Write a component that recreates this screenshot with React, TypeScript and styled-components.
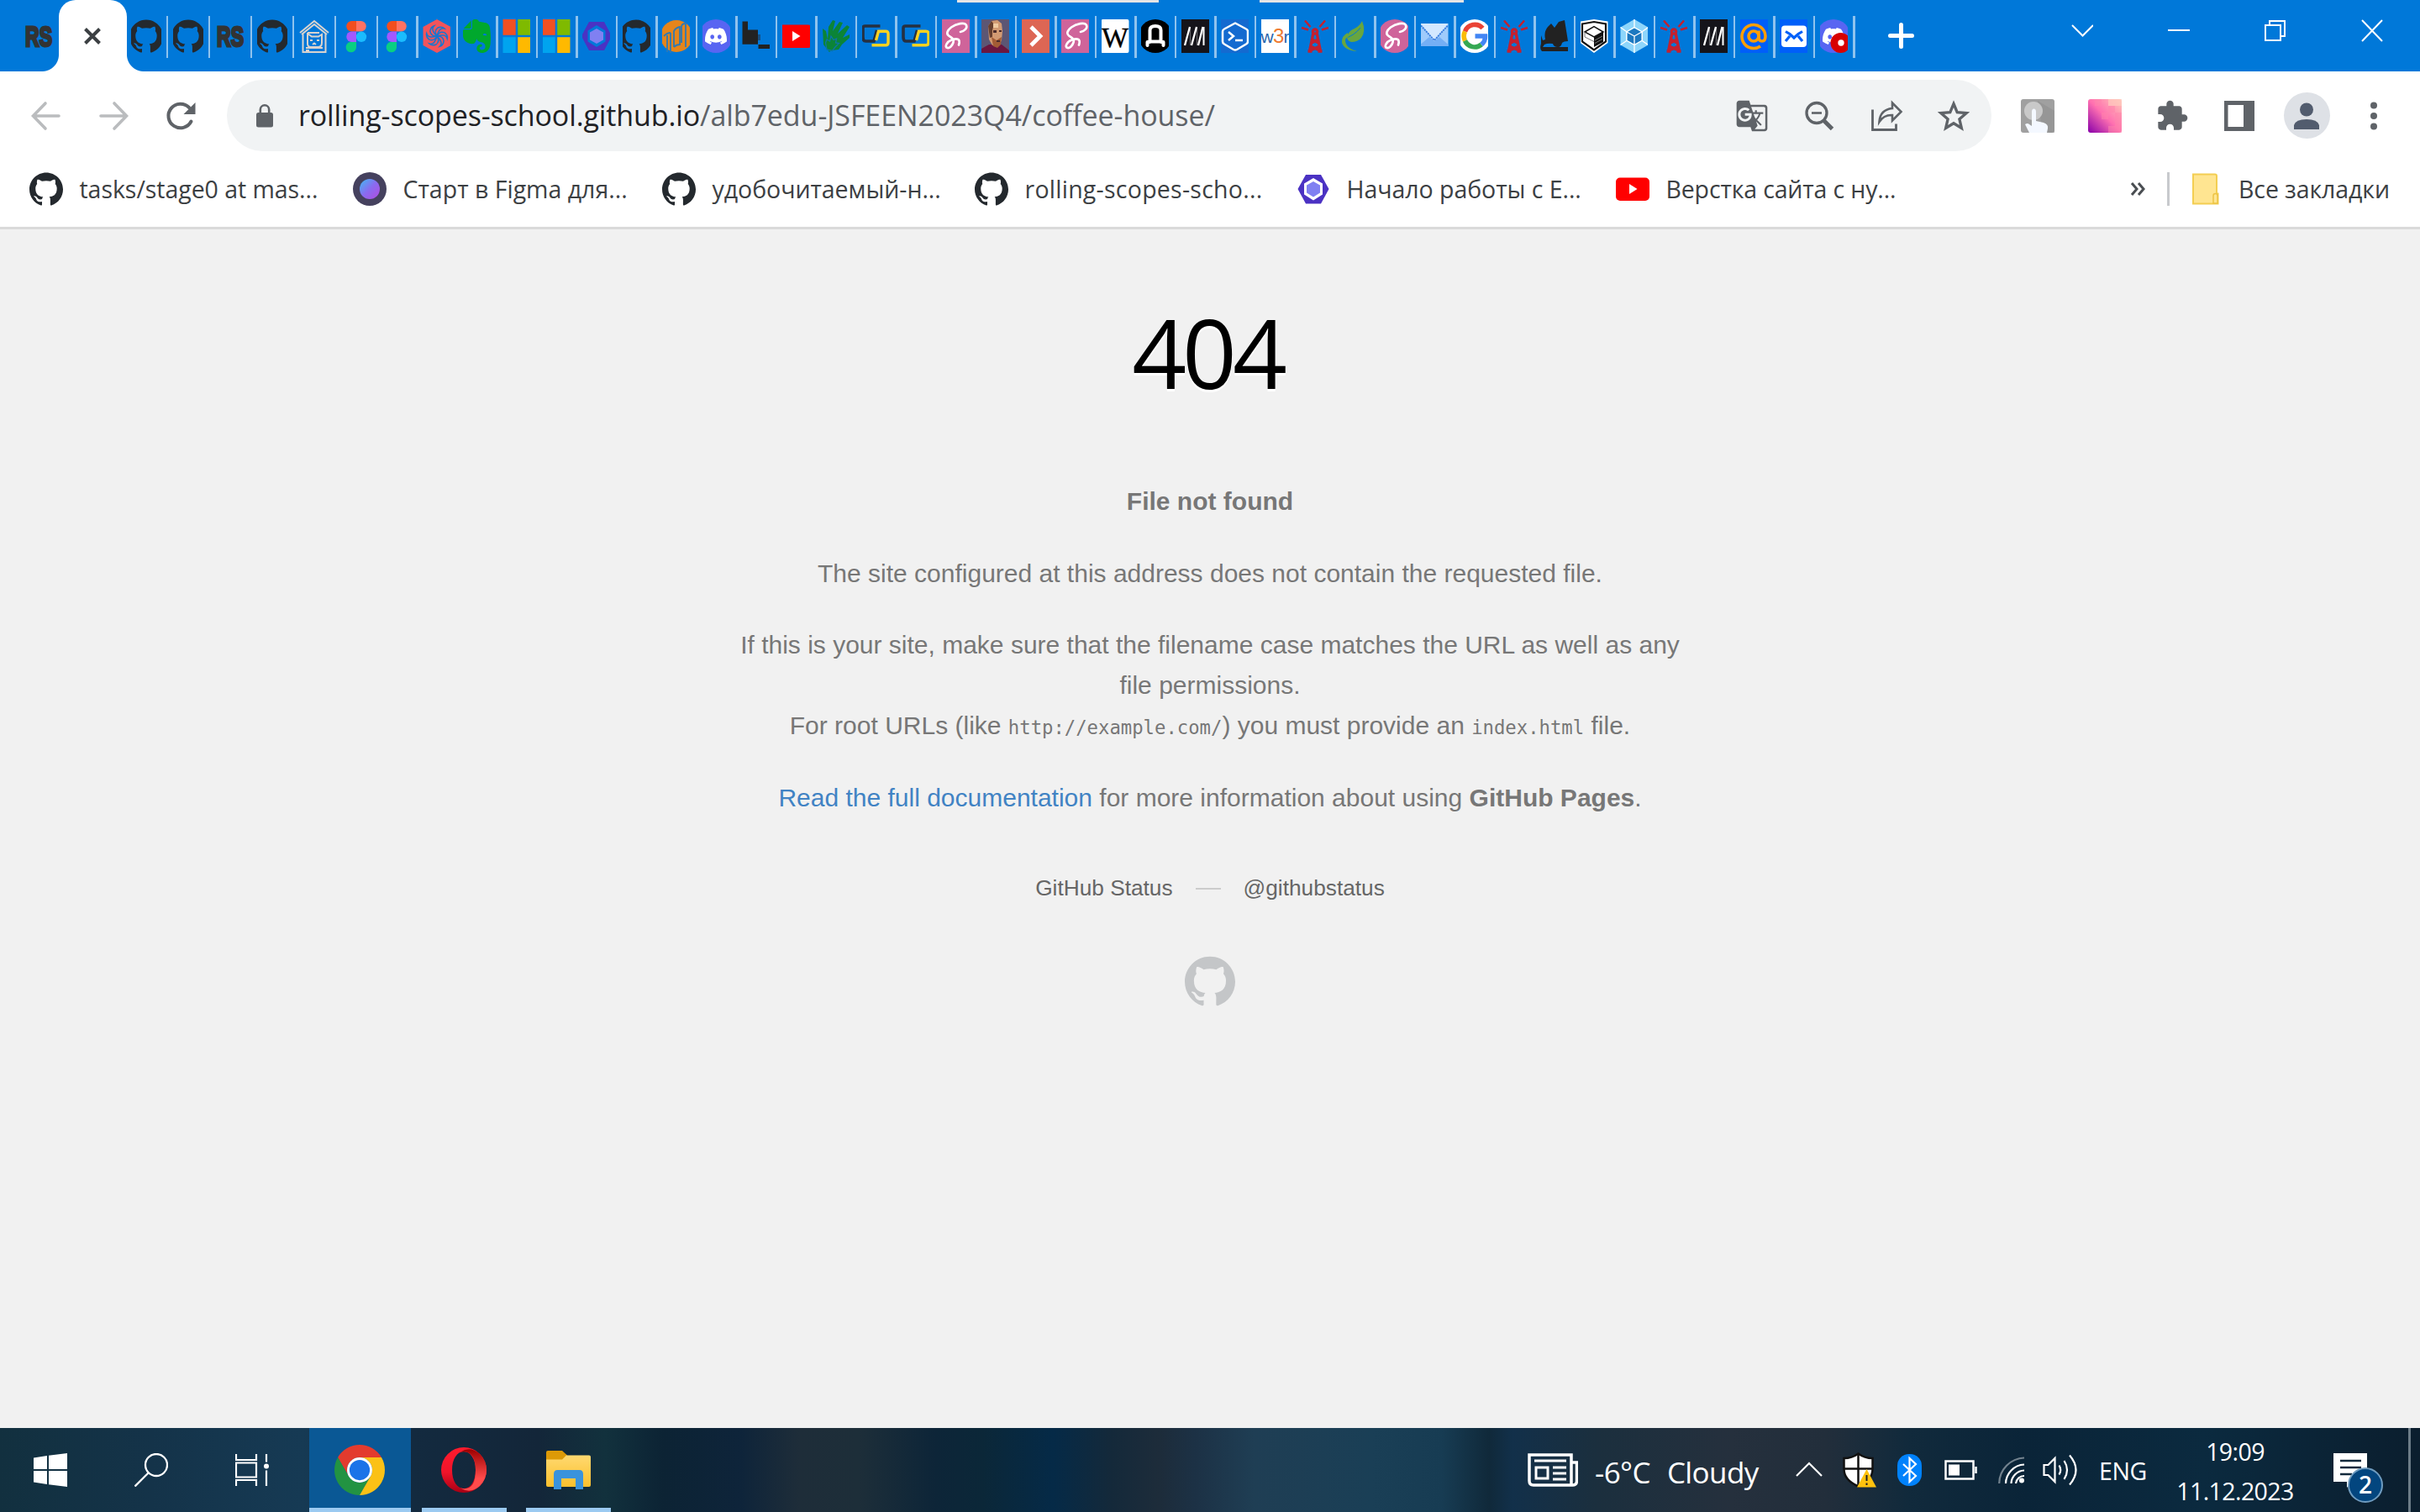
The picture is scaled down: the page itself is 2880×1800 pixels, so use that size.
import React from "react";
import styled, { createGlobalStyle, css } from "styled-components";
import { SiGithub, SiDiscord, SiEvernote } from "react-icons/si";
import { MdGTranslate, MdExtension } from "react-icons/md";

const UI_FONT = '"Open Sans", "Noto Sans", sans-serif';
const PAGE_FONT = '"Liberation Sans", Arial, sans-serif';

const GlobalStyle = createGlobalStyle`
  *, *::before, *::after { box-sizing: border-box; }
  body { margin: 0; background: #f1f1f1; }
  p, h1 { margin: 0; }
  a { color: inherit; text-decoration: none; }
  svg { display: block; flex-shrink: 0; }
`;

const Screen = styled.div`
  display: flex;
  flex-direction: column;
  width: 2880px;
  height: 1800px;
  overflow: hidden;
  background: #f1f1f1;
  font-family: ${UI_FONT};
  white-space: nowrap;
`;

/* ---------- tab strip ---------- */

const TabStrip = styled.header`
  position: relative;
  display: flex;
  height: 85px;
  flex-shrink: 0;
  background: #0078d9;
`;

const Notch = styled.div<{ $x: number; $w: number }>`
  position: absolute;
  top: 0;
  left: ${(p) => p.$x}px;
  width: ${(p) => p.$w}px;
  height: 3px;
  background: #e5e5e5;
`;

const PinnedTab = styled.div`
  display: flex;
  width: 70px;
  padding: 23px 6px 0 28px;
`;

const ActiveTab = styled.div`
  position: relative;
  display: flex;
  align-items: center;
  justify-content: center;
  width: 80.5px;
  height: 85px;
  background: #fff;
  border-radius: 20px 20px 0 0;

  &::before,
  &::after {
    content: "";
    position: absolute;
    bottom: 0;
    width: 20px;
    height: 20px;
  }
  &::before {
    left: -20px;
    background: radial-gradient(circle at 0 0, transparent 19.5px, #fff 20.5px);
  }
  &::after {
    right: -20px;
    background: radial-gradient(circle at 100% 0, transparent 19.5px, #fff 20.5px);
  }
`;

const Tab = styled.div<{ $wide?: boolean }>`
  display: flex;
  align-items: flex-start;
  justify-content: space-between;
  width: ${(p) => (p.$wide ? 49.95 : 47.5)}px;
  padding: 19px 0 0 5.5px;
  flex-shrink: 0;
`;

const TabDivider = styled.i`
  width: 2.5px;
  height: 50px;
  background: #8fc3ee;
`;

const Favicon = styled.div<{ $w?: number; $color?: string }>`
  display: flex;
  justify-content: center;
  width: ${(p) => p.$w ?? 33}px;
  height: 40px;
  margin-top: 4px;
  overflow: hidden;
  color: ${(p) => p.$color ?? "#24292e"};
  flex-shrink: 0;
`;

const PinnedFavicon = styled(Favicon)`
  margin-top: 0;
`;

const NewTab = styled.button`
  display: flex;
  margin: 27px 0 0 39px;
  padding: 0;
  width: 31px;
  height: 31px;
  border: 0;
  background: none;
`;

const WindowControls = styled.div`
  display: flex;
  margin-left: auto;
  padding: 23px 44px 0 0;
  gap: 89px;
`;

/* ---------- toolbar ---------- */

const Toolbar = styled.nav`
  display: flex;
  align-items: center;
  height: 105px;
  flex-shrink: 0;
  padding: 0 35px;
  background: #fff;
`;

const NavButtons = styled.div`
  display: flex;
  gap: 40px;
  width: 235px;
`;

const Omnibox = styled.div`
  display: flex;
  align-items: center;
  width: 2100px;
  height: 85px;
  padding: 0 25px 0 35px;
  border-radius: 43px;
  background: #f1f3f4;
`;

const Url = styled.div`
  margin-left: 30px;
  flex: 1;
  font-size: 34px;
  line-height: 85px;
  letter-spacing: -0.07px;
  color: #5f6368;
`;

const UrlHost = styled.span`
  letter-spacing: -0.12px;
  color: #202124;
`;

const IconRow = styled.div<{ $left?: number }>`
  display: flex;
  align-items: center;
  gap: 40px;
  margin-left: ${(p) => p.$left ?? 0}px;
  color: #5f6368;
`;

const Avatar = styled.div`
  display: flex;
  align-items: center;
  justify-content: center;
  width: 55px;
  height: 55px;
  margin: 0 -7.5px;
  border-radius: 50%;
  background: #dee1e6;
`;

/* ---------- bookmarks ---------- */

const BookmarkBar = styled.nav`
  display: flex;
  align-items: center;
  height: 93px;
  flex-shrink: 0;
  margin-top: -10px;
  padding: 10px 36px 10px 35px;
  border-bottom: 3px solid #dadada;
  background: #fff;
`;

const Bookmark = styled.a<{ $w?: number; $ls?: number }>`
  display: flex;
  align-items: center;
  gap: 19.5px;
  ${(p) => p.$w && css`width: ${p.$w}px;`}
  letter-spacing: ${(p) => p.$ls ?? 0}px;
  font-size: 28.5px;
  line-height: 40px;
  color: #3c4043;
`;

const BookmarkTail = styled.div`
  display: flex;
  align-items: center;
  margin-left: auto;
`;

const BarDivider = styled.i`
  width: 3px;
  height: 40px;
  margin: 0 27px 0 26px;
  background: #c8cacd;
`;

/* ---------- page ---------- */

const Page = styled.main`
  display: flex;
  flex-direction: column;
  align-items: center;
  flex: 1;
  padding-top: 71px;
  font-family: ${PAGE_FONT};
  font-size: 30px;
  line-height: 48px;
  text-align: center;
  color: #777;
`;

const Title = styled.h1`
  margin-bottom: 79px;
  padding-right: 6px;
  font-family: ${UI_FONT};
  font-size: 113.5px;
  font-weight: 400;
  line-height: 150px;
  letter-spacing: -5.1px;
  color: #000;
  text-shadow: 0 2.5px 0 #fff;
`;

const Paragraph = styled.p`
  margin-bottom: 37.5px;
`;

const Code = styled.code`
  font-family: "DejaVu Sans Mono", monospace;
  font-size: 22.25px;
  line-height: 1;
`;

const DocLink = styled.a`
  color: #4183c4;
`;

const StatusLinks = styled.div`
  display: flex;
  align-items: center;
  gap: 27px;
  margin: 22px 0 57px;
  font-size: 26.25px;
  line-height: 48px;
  color: #666;
`;

const Dash = styled.i`
  width: 30px;
  height: 2px;
  margin-top: 2px;
  background: #ccc;
`;

/* ---------- taskbar ---------- */

const Taskbar = styled.footer`
  display: flex;
  height: 100px;
  flex-shrink: 0;
  color: #fff;
  background: linear-gradient(
    90deg,
    #12303f 0, #143349 180px, #163a54 360px, #132a3f 490px, #132639 640px,
    #12313d 720px, #0c2334 790px, #0e243a 881px, #1e2d39 951px, #1d2e39 1022px,
    #0d2538 1113px, #0b2738 1169px, #052a47 1253px, #14293a 1323px, #1d2c3a 1379px,
    #1c3145 1421px, #1f3e54 1492px, #1a3f56 1632px, #173c53 1716px, #10293a 1772px,
    #12304a 1800px, #1b2f3e 1899px, #25303d 2060px, #222e3b 2173px, #112a3c 2271px,
    #0a2438 2411px, #0b2a3f 2622px, #0b1e2e 2880px
  );
`;

const TaskGroup = styled.div`
  display: flex;
  align-items: center;
  gap: 80px;
  width: 368px;
  padding-left: 40px;
`;

const TaskApp = styled.div<{ $active?: boolean }>`
  display: flex;
  align-items: center;
  justify-content: center;
  width: ${(p) => (p.$active ? 121 : 101)}px;
  margin-right: ${(p) => (p.$active ? 13 : 23)}px;
  border-bottom: 5px solid #9bcaf1;
  padding: 5px 1px 0 0;
  background: ${(p) => (p.$active ? "#0a5895" : "transparent")};
`;

const Tray = styled.div`
  display: flex;
  align-items: center;
  margin-left: auto;
`;

const Slot = styled.div<{ $w: number }>`
  display: flex;
  align-items: center;
  width: ${(p) => p.$w}px;
`;

const Weather = styled.span`
  display: flex;
  gap: 20px;
  width: 239px;
  margin-top: 5px;
  font-size: 35px;
  line-height: 48px;
  letter-spacing: -0.6px;
`;

const Lang = styled.span`
  width: 91px;
  margin-top: 2px;
  font-size: 28.5px;
  letter-spacing: -0.4px;
`;

const Clock = styled.div`
  display: flex;
  flex-direction: column;
  align-items: center;
  width: 142px;
  margin-top: 3px;
  font-size: 28.5px;
  line-height: 47px;
  letter-spacing: -0.6px;
`;

const Notifications = styled.div`
  position: relative;
  width: 60px;
  height: 60px;
  margin: 20px 29px 0 46px;
`;

const Badge = styled.b`
  position: absolute;
  left: 17px;
  top: 17px;
  width: 42px;
  height: 42px;
  border: 2px solid #6f9cc0;
  border-radius: 50%;
  background: #03467f;
  font-size: 28px;
  font-weight: 600;
  line-height: 37px;
  text-align: center;
`;

const ShowDesktop = styled.i`
  width: 14px;
  height: 100px;
  border-left: 3px solid #6c7c87;
`;

/* ---------- drawings ---------- */

const Svg = ({ children, size = 40 }: { children: React.ReactNode; size?: number }) => (
  <svg width={size} height={size} viewBox="0 0 40 40">{children}</svg>
);

const RsLogo = () => (
  <Svg>
    <text x="4" y="32.300" fontFamily="Liberation Sans, sans-serif" fontWeight="700" fontSize="34" textLength="32" lengthAdjust="spacingAndGlyphs" fill="#333" stroke="#333" strokeWidth="3">RS</text>
  </Svg>
);

const CatHouse = () => (
  <Svg>
    <g fill="none" stroke="#d9d3cf" strokeWidth="2">
      <path d="M3 16 20 2l17 14M5 18 20 6l15 12M6.500 17v22h27V17M10 34h20M10 37h4" />
      <path d="M12 16h14M12 16v13q0 4 4 4h8q5 0 5-5V18l-4 2.500h-8L12 17" />
      <path d="M15 25h3M23 25h3M18 30l2-1.500 2 1.500M20 28v1" />
    </g>
  </Svg>
);

const Figma = () => (
  <Svg>
    <path d="M14.500 2H20v12.500h-5.500a6.200 6.200 0 0 1 0-12.500z" fill="#f24e1e" />
    <path d="M20 2h5.500a6.200 6.200 0 0 1 0 12.500H20z" fill="#ff7262" />
    <path d="M14.500 14.500H20V27h-5.500a6.200 6.200 0 0 1 0-12.500z" fill="#a259ff" />
    <circle cx="26" cy="20.800" r="6.200" fill="#1abcfe" />
    <path d="M14.500 27H20v6.500a6.200 6.200 0 1 1-5.500-6.500z" fill="#0acf83" />
  </Svg>
);

const SwirlHex = () => (
  <Svg>
    <path d="M20 0 36.500 9v22L20 40 3.500 31V9z" fill="#f2545b" />
    <g fill="none" stroke="#1876cf" strokeWidth="1.500">
      {[0, 60, 120, 180, 240, 300].map((a) => (
        <path key={a} d="M20 20q-4-6 1-10 5-2 8 1-4-1-6 2-2 3-3 7" transform={`rotate(${a} 20 20)`} />
      ))}
    </g>
  </Svg>
);

const Microsoft = () => (
  <Svg>
    <path d="M3.500 0h15.200v18.800H3.500z" fill="#f25022" />
    <path d="M21.200 0h15.300v18.800H21.200z" fill="#7fba00" />
    <path d="M3.500 21.200h15.200V40H3.500z" fill="#00a4ef" />
    <path d="M21.200 21.200h15.300V40H21.200z" fill="#ffb900" />
  </Svg>
);

const Eslint = () => (
  <Svg>
    <path fillRule="evenodd" d="M11 3h18l9 17-9 17H11L2 20zM20 7 9.500 13.500v13L20 33l10.500-6.500v-13z" fill="#4b32c3" />
    <path d="m20 11 8 4.500v9L20 29l-8-4.500v-9z" fill="#8080f2" />
  </Svg>
);

const OrangeBars = () => (
  <Svg>
    <circle cx="20" cy="20" r="19" fill="#e5851b" />
    <g fill="none" stroke="#2f79b4" strokeWidth="1.800">
      <path d="M5 20q4-4 8-4M9 19v20M13 16v24M17 33V14q2-4 7-5v21q-4 0-7 3M26 28V9q0-4 5-4v28" />
    </g>
  </Svg>
);

const DiscordMark = () => (
  <>
    <circle cx="20" cy="20" r="20" fill="#5865f2" />
    <SiDiscord x={7} y={7} size={26} color="#fff" />
  </>
);

const Blocks = () => (
  <Svg>
    <path d="M3.500 2.500H10v10h12v17.200H3.500z" fill="#222" />
    <path d="M22 18h3v7h-3z" fill="#174f83" />
    <path d="M22.500 30h14v5h-14z" fill="#222" />
  </Svg>
);

const YouTubeTile = () => (
  <Svg>
    <rect y="6.500" width="40" height="27.500" rx="5" fill="#f00" />
    <path d="M16 14v12l9.500-6z" fill="#fff" />
  </Svg>
);

const Hands = () => (
  <Svg>
    <path d="M12 39 5 30l-1-19 4 3 2 10 1-15 5-8 3 1-3 12 8-11 4 1-6 13 11-10 3 2-8 13 8-4v4l-9 8-4 6-9 1z" fill="#0b8437" />
    <path d="M9 36 7.500 28l1.500-4 3.500 2 1.500-6 3 4.500 3.500-1.500-1 5 4 .5-5 5-3 4z" fill="none" stroke="#0b74a8" strokeWidth="1.300" />
  </Svg>
);

const ChainLogo = () => (
  <Svg>
    <path d="M25.500 8H7.500Q5 8 5 10.500v11q0 4.500 3.500 4.500H18l3.500-13" fill="none" stroke="#263040" strokeWidth="3.600" />
    <path d="m20.500 25 3-10.700H32q3 0 3 3v10.500q0 3-3 3H15.500" fill="none" stroke="#ffd21f" strokeWidth="3.400" />
  </Svg>
);

const SassTile = ({ round }: { round?: boolean }) => (
  <Svg>
    {round ? <circle cx="20" cy="20" r="20" fill="#cf649a" /> : <path d="M0 0h40v40H0z" fill="#cf649a" />}
    <path d="M26 15c5-1 8.500-4.500 7-8-2-4-12-2-18 2.500-5 4-6 7.500-3 10 3 2 7 4 5.500 8-1.200 4-4.500 7-7 6.500-4-1-.5-7.500 5-9.500 4-1.300 8-1.500 9 1 .5 1.600.2 3-.5 5" fill="none" stroke="#fff" strokeWidth="2.700" strokeLinecap="round" />
  </Svg>
);

const Portrait = () => (
  <Svg>
    <path d="M0 0h40v40H0z" fill="#5c5674" />
    <path d="M3 40v-5l9-5h15l9 7v3z" fill="#6a1740" />
    <path d="M11 8 15 2l7-1 5 4 1 9-1 11-4 7-7-1-4-7z" fill="#d29a72" />
    <path d="M11 8 15 2l3 4-2 7 0 8-3 1z" fill="#68402f" />
    <path d="M15 21l6 4 6-4-1 9-4 4-5-2z" fill="#a35c35" />
    <path d="M17 13h4v3h-4zM24 13h3v2h-3zM21 25h4v2h-4z" fill="#4c2b2a" />
    <path d="M17 5h6v5h-6z" fill="#efc9a0" />
  </Svg>
);

const ChevronTile = () => (
  <Svg>
    <path d="M0 0h40v40H0z" fill="#dd6654" />
    <path d="m15 9 11 11-11 11" fill="none" stroke="#fff" strokeWidth="4.800" />
  </Svg>
);

const WikiTile = () => (
  <Svg>
    <rect x="3.500" width="33" height="40" rx="2" fill="#fff" />
    <text x="4" y="32.500" textLength="32" lengthAdjust="spacingAndGlyphs" fontFamily="Liberation Serif, serif" fontSize="34" fill="#000" stroke="#000" strokeWidth=".4">W</text>
  </Svg>
);

const ArchTile = () => (
  <Svg>
    <circle cx="20" cy="20" r="20" fill="#000" />
    <path d="M10.500 31v-4h3V13q0-5 6.500-5t6.500 5v14h3v4M13 26.500h14" fill="none" stroke="#fff" strokeWidth="4" strokeLinecap="round" strokeLinejoin="round" />
  </Svg>
);

const MdnTile = () => (
  <Svg>
    <path d="M0 0h40v40H0z" fill="#15141a" />
    <path d="m8 31 6-22M16 31l6-22M24 31l5.500-22" stroke="#fff" strokeWidth="2.300" />
    <path d="M14.500 9v22M22.500 9v22" stroke="#fff" strokeWidth="1.200" opacity=".35" />
    <path d="M30.500 9v22" stroke="#fff" strokeWidth="2" />
  </Svg>
);

const ConsoleHex = () => (
  <Svg>
    <path d="M0 0h40v40H0z" fill="#146ad0" />
    <path d="m20 4.500 13 7q2 1 2 3v12q0 2-2 3l-11 6.500q-2 1-4 0L7 29.500q-2-1-2-3v-12q0-2 2-3z" fill="none" stroke="#fff" strokeWidth="2.500" strokeLinejoin="round" />
    <path d="m12 15 6 5-6 5M20 25h9" fill="none" stroke="#fff" strokeWidth="2.500" />
  </Svg>
);

const W3rTile = () => (
  <Svg>
    <path d="M0 0h40v40H0z" fill="#fff" />
    <text x="3.500" y="28" fontFamily="Liberation Sans, sans-serif" fontSize="21" letterSpacing="-.8" fill="#2a66ad">w<tspan fill="#ee7a30" fontSize="24">3</tspan>r</text>
  </Svg>
);

const RadioTower = () => (
  <Svg>
    <g fill="none" stroke="#c4202f" strokeWidth="3.400">
      <path d="M18 16 13.500 38M22 16l4.500 22M16.500 24l7.500 4M23.500 24 16 28M14.500 32l11 5M25.500 32l-11 5M11.500 38h5M23.500 38h5" />
      <circle cx="20" cy="14.500" r="2.600" />
      <path d="M14.500 9 8 1.500M12 12.500 4 10M25.500 9 32 1.500M28 12.500 36 10" strokeWidth="2.500" />
    </g>
  </Svg>
);

const Leaf = () => (
  <Svg>
    <path d="M29 2q5 12-1 20-4 5-12 5-4-1-5-5 1-8 9-11 6-3 9-9z" fill="#68a63f" />
    <path d="M27 10Q20 19 10 22q-4 3-2 8 4 8 15 8" fill="none" stroke="#0078d9" strokeWidth="1" />
    <path d="M12 16Q4 20 5 28q3 9 18 10Q9 34 9 25q0-3 4-4z" fill="#68a63f" />
  </Svg>
);

const LightMail = () => (
  <Svg>
    <path d="M3.500 5h33v27h-33z" fill="#9fcbfb" />
    <path d="M3.500 5h33L20 24z" fill="#d3e8ff" />
    <path d="M4 7.500 20 25 36 7.500" fill="none" stroke="#3478dc" strokeWidth="1.800" strokeDasharray="2 1" />
    <path d="M3.500 30 14 21l6 5 6-5 10.500 9v2h-33z" fill="#74aff5" />
  </Svg>
);

const GoogleTile = () => (
  <Svg>
    <circle cx="20" cy="20" r="20" fill="#fff" />
    <g fill="none" strokeWidth="5.600">
      <path d="M29.500 10.500A12.500 12.500 0 0 0 8.500 14.500" stroke="#ea4335" />
      <path d="M8.500 14.500a12.500 12.500 0 0 0 0 11" stroke="#fbbc05" />
      <path d="M8.500 25.500a12.500 12.500 0 0 0 19.500 4.500" stroke="#34a853" />
      <path d="M28 30a12 12 0 0 0 4.500-10H20.500" stroke="#4285f4" />
    </g>
  </Svg>
);

const Ship = () => (
  <Svg>
    <path d="M4 19l2 6 3-1q-2-9 3-15l4-4 4 5 5-7 7-2 4 25q-5 0-7 2-1 5-5 5-5 0-6-4-6-1-10 1l-2 3h31v5H5q-3-2-1-9z" fill="#222" />
  </Svg>
);

const Shield = () => (
  <Svg>
    <path d="M3.500 2.500 20 0l16.500 2.500V28L20 40 3.500 28z" fill="#fff" />
    <path d="M6 5.500 20 3l14 2.500v21L20 36.500 6 26.500z" fill="none" stroke="#111" strokeWidth="2.200" />
    <path d="m9 15 11-6.500L31 15l-11 6z" fill="#fff" stroke="#111" strokeWidth="1.500" />
    <path d="m20 21 11-6v12l-11 6z" fill="#111" />
    <path d="m21 25 9-5M21 28.500l9-5M9 15v6l11 5.500" fill="none" stroke="#777" strokeWidth="1" />
  </Svg>
);

const WebpackMark = () => (
  <Svg>
    <path d="m20 0 16.500 9.500v21L20 40 3.500 30.500v-21z" fill="#8ed6fb" />
    <path d="m20 10.500 8.500 4.800v9.700L20 29.800 11.500 25v-9.700z" fill="#1c78c0" />
    <path d="M20 0v10.500M20 20v20M20 20l-8.500-4.700L3.500 9.500M20 20l8.500-4.700 8-5.800M11.500 25l-8 5.500M28.500 25l8 5.500M20 9.500l9.300 5.300v10.400L20 30.500l-9.300-5.300V14.800z" fill="none" stroke="#fff" strokeWidth="1.300" />
  </Svg>
);

const AtTile = () => (
  <Svg>
    <path d="M0 0h40v40H0z" fill="#005ff9" />
    <circle cx="20" cy="20" r="6" fill="none" stroke="#ff9e00" strokeWidth="3.600" />
    <path d="M26 13.500V21q0 5 4 5t4-6A14 14 0 1 0 28 32" fill="none" stroke="#ff9e00" strokeWidth="3.600" />
  </Svg>
);

const MailTile = () => (
  <Svg>
    <path d="M0 0h40v40H0z" fill="#005ff9" />
    <rect x="5" y="7.500" width="30" height="25.500" rx="4" fill="#fff" />
    <path d="m10 14.500 5 3 5 4.500 5-4.500 5-3M10 26l5-6M30 26l-5-6" fill="none" stroke="#005ff9" strokeWidth="3.200" />
  </Svg>
);

const DiscordRecording = () => (
  <Svg>
    <DiscordMark />
    <circle cx="28.500" cy="28" r="12" fill="#d80000" />
    <circle cx="29" cy="28" r="3.700" fill="#fff" />
  </Svg>
);

const OrbBadge = () => (
  <Svg>
    <defs>
      <linearGradient id="orb" x1="0" y1="0" x2="1" y2="1">
        <stop offset="0" stopColor="#3fbcf5" />
        <stop offset=".5" stopColor="#8a6bf0" />
        <stop offset="1" stopColor="#b24cdf" />
      </linearGradient>
    </defs>
    <circle cx="20" cy="20" r="20" fill="#45415e" />
    <circle cx="20" cy="20" r="12" fill="url(#orb)" />
  </Svg>
);

const tabIcons: React.ReactNode[] = [
  <Figma />, <SwirlHex />, <SiEvernote size={40} color="#00a82d" />, <Microsoft />, <Microsoft />, <Eslint />,
  <SiGithub size={40} />, <OrangeBars />, <Svg><DiscordMark /></Svg>, <Blocks />, <YouTubeTile />, <Hands />,
  <ChainLogo />, <ChainLogo />, <SassTile />, <Portrait />, <ChevronTile />, <SassTile />, <WikiTile />,
  <ArchTile />, <MdnTile />, <ConsoleHex />, <W3rTile />, <RadioTower />, <Leaf />, <SassTile round />,
  <LightMail />, <GoogleTile />, <RadioTower />, <Ship />, <Shield />, <WebpackMark />, <RadioTower />,
  <MdnTile />, <AtTile />, <MailTile />, <DiscordRecording />,
];

const wideTabIcons: React.ReactNode[] = [
  <SiGithub size={40} />, <SiGithub size={40} />, <RsLogo />, <SiGithub size={40} />, <CatHouse />, <Figma />,
];

const BookmarkHex = () => (
  <Svg>
    <path d="M11 3h18l9.500 17L29 37.500H11L1.500 20z" fill="#4b32c3" />
    <path d="m20 7 11 6.500v13L20 33.500 9 26.500v-13z" fill="#fff" />
    <path d="m20 11 8 4.500v9L20 29.500l-8-5v-9z" fill="#8080f2" />
  </Svg>
);

const ChromeLogo = () => (
  <svg width="60" height="60" viewBox="0 0 48 48">
    <path d="M3.220 12A24 24 0 0 1 44.780 12H24a12 12 0 0 0-10.390 18z" fill="#e33b2e" />
    <path d="M3.220 12 13.610 30A12 12 0 0 0 34.390 30L24 48A24 24 0 0 1 3.220 12z" fill="#229342" />
    <path d="M44.780 12A24 24 0 0 1 24 48L34.390 30A12 12 0 0 0 24 12z" fill="#fbc116" />
    <circle cx="24" cy="24" r="12" fill="#fff" />
    <circle cx="24" cy="24" r="9.700" fill="#1a73e8" />
  </svg>
);

const OperaLogo = () => (
  <svg width="56" height="56" viewBox="0 0 56 56">
    <defs>
      <linearGradient id="opL" x1="0" y1="0" x2="0" y2="1">
        <stop offset="0" stopColor="#ff1b2d" /><stop offset=".55" stopColor="#f0142a" /><stop offset="1" stopColor="#a70014" />
      </linearGradient>
      <linearGradient id="opR" x1="0" y1="0" x2="0" y2="1">
        <stop offset="0" stopColor="#9c0000" /><stop offset=".7" stopColor="#ff4b4b" />
      </linearGradient>
    </defs>
    <path fillRule="evenodd" d="M28 1a27 27 0 1 0 0 54 27 27 0 0 0 0-54zM28 6c8 0 14 9 14 22s-6 22-14 22-14-9-14-22S20 6 28 6z" fill="url(#opL)" />
    <path d="M24 6.500Q36-1 47 9q8 8 8 19t-8 19q-11 10-23 2.500Q42 54 42 28 42 4 24 6.500z" fill="url(#opR)" />
  </svg>
);

const ExplorerLogo = () => (
  <svg width="53" height="46" viewBox="0 0 53 46">
    <defs>
      <linearGradient id="fold" x1="0" y1="0" x2="0" y2="1">
        <stop offset="0" stopColor="#ffd970" /><stop offset="1" stopColor="#fbc02d" />
      </linearGradient>
    </defs>
    <path d="M0 2q0-2 2-2h17l6 5.500-4 5.500H0z" fill="#dd9a07" />
    <path d="M0 10.500h19l5-5h27q2 0 2 2V41q0 2-2 2H2q-2 0-2-2z" fill="url(#fold)" />
    <path d="M9 46V28q0-5 4.500-5h26q4.500 0 4.500 5v18h-9V33H18v13z" fill="#3a93dc" />
  </svg>
);

const TabBar = () => (
  <TabStrip>
    <Notch $x={1139} $w={240} />
    <Notch $x={1499} $w={243} />
    <PinnedTab>
      <PinnedFavicon $w={36}><RsLogo /></PinnedFavicon>
    </PinnedTab>
    <ActiveTab>
      <svg width="20" height="20" viewBox="0 0 20 20"><path d="m1.500 1.500 17 17m0-17-17 17" stroke="#3c4043" strokeWidth="4" /></svg>
    </ActiveTab>
    {wideTabIcons.map((icon, i) => (
      <Tab key={i} $wide><Favicon $w={36}>{icon}</Favicon><TabDivider /></Tab>
    ))}
    {tabIcons.map((icon, i) => (
      <Tab key={i}><Favicon>{icon}</Favicon><TabDivider /></Tab>
    ))}
    <NewTab>
      <svg width="31" height="31" viewBox="0 0 31 31"><path d="M15.500 2.500v26M2.500 15.500h26" stroke="#fff" strokeWidth="5" strokeLinecap="round" /></svg>
    </NewTab>
    <WindowControls>
      <svg width="26" height="27" viewBox="0 0 26 27"><path d="m1 7 12.500 12.500L26 7" fill="none" stroke="#fff" strokeWidth="2" /></svg>
      <svg width="26" height="27" viewBox="0 0 26 27"><path d="M0 13h26" stroke="#fff" strokeWidth="2" /></svg>
      <svg width="26" height="27" viewBox="0 0 26 27"><path d="M1 7h18v18H1zM6 7V2h18v18h-5" fill="none" stroke="#fff" strokeWidth="2" /></svg>
      <svg width="26" height="27" viewBox="0 0 26 27"><path d="m1 1 24 25M25 1 1 26" stroke="#fff" strokeWidth="2" /></svg>
    </WindowControls>
  </TabStrip>
);

const AddressBar = () => (
  <Toolbar>
    <NavButtons>
      <Svg><path d="M35 20H5M19 5 4.500 20 19 35" fill="none" stroke="#babcbe" strokeWidth="3.600" strokeLinecap="round" /></Svg>
      <Svg><path d="M5 20h30M21 5l14.500 15L21 35" fill="none" stroke="#babcbe" strokeWidth="3.600" strokeLinecap="round" /></Svg>
      <Svg>
        <path d="M32.500 26.500A14.300 14.300 0 1 1 30 10" fill="none" stroke="#5f6368" strokeWidth="4" strokeLinecap="round" />
        <path d="M37.500 4v14h-14z" fill="#5f6368" />
      </Svg>
    </NavButtons>
    <Omnibox>
      <svg width="20" height="28" viewBox="0 0 20 28">
        <rect y="10" width="20" height="17.500" rx="2.500" fill="#5f6368" />
        <path d="M4.800 11V6.500a5.200 5.200 0 0 1 10.400 0V11" fill="none" stroke="#5f6368" strokeWidth="2.600" />
      </svg>
      <Url><UrlHost>rolling-scopes-school.github.io</UrlHost>/alb7edu-JSFEEN2023Q4/coffee-house/</Url>
      <IconRow>
        <MdGTranslate size={40} />
        <Svg>
          <circle cx="17" cy="16.500" r="12" fill="none" stroke="#5f6368" strokeWidth="3.300" />
          <path d="M11 16.500h12" stroke="#5f6368" strokeWidth="2.600" />
          <path d="m25.500 25.500 10 10" stroke="#5f6368" strokeWidth="5" />
        </Svg>
        <Svg>
          <path d="M3.500 12.500v24h28v-7" fill="none" stroke="#5f6368" strokeWidth="2.800" />
          <path d="M27 4.500 37.500 15 27 25.500v-6.500q-10-.5-15.500 8 1-14.500 15.500-16z" fill="none" stroke="#5f6368" strokeWidth="2.600" />
        </Svg>
        <Svg>
          <path d="m20 5.500 4.200 10.200 11 .9-8.300 7.200 2.500 10.700L20 28.800l-9.400 5.700 2.500-10.700-8.300-7.200 11-.9z" fill="none" stroke="#5f6368" strokeWidth="3.300" />
        </Svg>
      </IconRow>
    </Omnibox>
    <IconRow $left={35}>
      <Svg>
        <rect width="40" height="40" rx="3" fill="#a0a0a0" />
        <path d="M20 2 40 14V40H26z" fill="#8c8c8c" opacity=".5" />
        <circle cx="15" cy="14" r="11" fill="#c9c9c9" />
        <path d="M13 15q0-3.500 2.500-3.500T18 15v11l9 2q6 2 5 7l-1 5H10l-5-10q3-2 5 0l3 2z" fill="#f4f8ff" />
      </Svg>
      <svg width="40" height="40" viewBox="0 0 40 40">
        <defs>
          <linearGradient id="pk" x1="0" y1="1" x2="1" y2="0">
            <stop offset="0" stopColor="#8800aa" /><stop offset=".5" stopColor="#ff70b0" /><stop offset="1" stopColor="#ffc8b8" />
          </linearGradient>
        </defs>
        <rect width="40" height="40" rx="3" fill="url(#pk)" />
        <path d="M8 0h8v8H8zM24 8h8v8h-8zM32 16h8v24h-8zM16 16h8v8h-8zM24 32h8v8h-8z" fill="#ff84ac" opacity=".5" />
        <path d="M24 0h16v8H24z" fill="#ffc9bd" opacity=".7" />
      </svg>
      <MdExtension size={40} />
      <Svg><path fillRule="evenodd" d="M2 2h36v36H2zM6.500 7v26h18.500V7z" fill="#5f6368" /></Svg>
      <Avatar>
        <svg width="34" height="34" viewBox="0 0 34 34" fill="#525c6e">
          <circle cx="17" cy="9.500" r="8" />
          <path d="M2 33v-5q2-7 15-7t15 7v5z" />
        </svg>
      </Avatar>
      <Svg><g fill="#5f6368"><circle cx="20" cy="7.500" r="4" /><circle cx="20" cy="20" r="4" /><circle cx="20" cy="32.500" r="4" /></g></Svg>
    </IconRow>
  </Toolbar>
);

const Bookmarks = () => (
  <BookmarkBar>
    <Bookmark $w={385} $ls={-0.05}><SiGithub size={40} color="#24292e" />tasks/stage0 at mas...</Bookmark>
    <Bookmark $w={368}><OrbBadge />Старт в Figma для...</Bookmark>
    <Bookmark $w={372} $ls={-0.05}><SiGithub size={40} color="#24292e" />удобочитаемый-н...</Bookmark>
    <Bookmark $w={383} $ls={0.25}><SiGithub size={40} color="#24292e" />rolling-scopes-scho...</Bookmark>
    <Bookmark $w={380} $ls={-0.05}><BookmarkHex />Начало работы с E...</Bookmark>
    <Bookmark $ls={-0.15}><YouTubeTile />Верстка сайта с ну...</Bookmark>
    <BookmarkTail>
      <svg width="18" height="16" viewBox="0 0 18 16"><path d="m2 1 6 7-6 7M10 1l6 7-6 7" fill="none" stroke="#4a4e52" strokeWidth="3" /></svg>
      <BarDivider />
      <Bookmark $ls={-0.1}>
        <svg width="36" height="38" viewBox="0 0 36 38">
          <path d="M1 1.500h26q2 0 2 2v21h1.500V36.500H1z" fill="#ffe591" stroke="#f3ce52" strokeWidth="2" />
          <path d="M25 36V27q0-2.500 2.500-2.500T30 27v9z" fill="#ffe591" stroke="#edc445" strokeWidth="1.500" />
        </svg>
        Все закладки
      </Bookmark>
    </BookmarkTail>
  </BookmarkBar>
);

const NotFound = () => (
  <Page>
    <Title>404</Title>
    <Paragraph><strong>File not found</strong></Paragraph>
    <Paragraph>The site configured at this address does not contain the requested file.</Paragraph>
    <Paragraph>
      If this is your site, make sure that the filename case matches the URL as well as any<br />
      file permissions.<br />
      For root URLs (like <Code>http://example.com/</Code>) you must provide an <Code>index.html</Code> file.
    </Paragraph>
    <Paragraph>
      <DocLink>Read the full documentation</DocLink> for more information about using <strong>GitHub Pages</strong>.
    </Paragraph>
    <StatusLinks><a>GitHub Status</a><Dash /><a>@githubstatus</a></StatusLinks>
    <SiGithub size={60} color="#c4c6c8" />
  </Page>
);

const BottomBar = () => (
  <Taskbar>
    <TaskGroup>
      <Svg><path d="M0 5.500 16 3v16H0zM18 2.700 40 0v19H18zM0 21h16v16L0 34.500zM18 21h22v19l-22-2.700z" fill="#fff" /></Svg>
      <Svg><circle cx="26" cy="14" r="13" fill="none" stroke="#fff" strokeWidth="2.300" /><path d="M16.500 23.500.5 39.500" stroke="#fff" strokeWidth="2.300" /></Svg>
      <Svg><path d="M1 1v7h24V1M1 11.500h24v17H1zM1 39v-7h24v7M37 1v9.500M37 20.500V39" fill="none" stroke="#fff" strokeWidth="2.200" /><circle cx="37" cy="15.500" r="3" fill="#fff" /></Svg>
    </TaskGroup>
    <TaskApp $active><ChromeLogo /></TaskApp>
    <TaskApp><OperaLogo /></TaskApp>
    <TaskApp><ExplorerLogo /></TaskApp>
    <Tray>
      <Slot $w={80}>
        <svg width="60" height="40" viewBox="0 0 60 40">
          <path d="M2 2h50v36H7q-5 0-5-5zM52 11h6.500v22q0 5-5 5H9" fill="none" stroke="#fff" strokeWidth="3.500" />
          <path d="M8 9h38M30 17h16M30 24h16M30 31h16" stroke="#fff" strokeWidth="3" />
          <rect x="10" y="17" width="14" height="13" fill="none" stroke="#fff" strokeWidth="3" />
        </svg>
      </Slot>
      <Weather><span>-6°C</span><span>Cloudy</span></Weather>
      <Slot $w={56}><svg width="32" height="20" viewBox="0 0 32 20"><path d="m1 17 15-15 15 15" fill="none" stroke="#fff" strokeWidth="2.200" /></svg></Slot>
      <Slot $w={65}>
        <svg width="40" height="42" viewBox="0 0 40 42">
          <path d="M18.500 1.500Q26 7 35.500 7v13q0 13-17 20.500Q1.500 33 1.500 20V7q9.500 0 17-5.500z" fill="#fff" stroke="#111" strokeWidth="2.500" />
          <path d="M18.500 2v38M2 19.500h33" stroke="#111" strokeWidth="2.500" />
          <path d="M28.500 20 40 41.500H17z" fill="#ffc20e" />
          <path d="M28.500 27v7M28.500 36.500v2.500" stroke="#222" strokeWidth="2" />
        </svg>
      </Slot>
      <Slot $w={56}>
        <svg width="29" height="40" viewBox="0 0 29 40">
          <rect y="1" width="29" height="38" rx="14" fill="#0082fc" />
          <path d="m7 13 15 14-7.500 7V6l7.500 7L7 27" fill="none" stroke="#fff" strokeWidth="2.200" />
        </svg>
      </Slot>
      <Slot $w={64}>
        <svg width="39" height="24" viewBox="0 0 39 24">
          <path d="M1.500 1.500h33v21h-33zM37.500 8v8" fill="none" stroke="#fff" strokeWidth="2.500" />
          <path d="M5 5.500h13v13H5z" fill="#fff" />
        </svg>
      </Slot>
      <Slot $w={53}>
        <svg width="32" height="32" viewBox="0 0 32 32" fill="none" stroke="#fff" strokeWidth="2.200">
          <path d="M1.200 32A31 31 0 0 1 31 1.500" stroke="#73828e" />
          <path d="M9 32A23 23 0 0 1 31 9.500M15.500 32A16 16 0 0 1 31 16.500M21 32a10 10 0 0 1 10-9" />
          <circle cx="28" cy="28.500" r="3" fill="#fff" stroke="none" />
        </svg>
      </Slot>
      <Slot $w={67}>
        <svg width="43" height="40" viewBox="0 0 43 40" fill="none" stroke="#fff" strokeWidth="2.200">
          <path d="M1.500 14h5l8-8v28l-8-8h-5zM19.500 14.500q3.500 5.500 0 11M25.500 9q7 11 0 22M32 2.500q15 17.500 0 35" />
        </svg>
      </Slot>
      <Lang>ENG</Lang>
      <Clock><span>19:09</span><span>11.12.2023</span></Clock>
      <Notifications>
        <svg width="42" height="42" viewBox="0 0 42 42">
          <path d="M0 0h40v34H22l-6 7v-7H0z" fill="#fff" />
          <path d="M8 9h25M8 17h25M8 25h14" stroke="#12293c" strokeWidth="2.400" />
        </svg>
        <Badge>2</Badge>
      </Notifications>
      <ShowDesktop />
    </Tray>
  </Taskbar>
);

export default function App() {
  return (
    <Screen>
      <GlobalStyle />
      <TabBar />
      <AddressBar />
      <Bookmarks />
      <NotFound />
      <BottomBar />
    </Screen>
  );
}
